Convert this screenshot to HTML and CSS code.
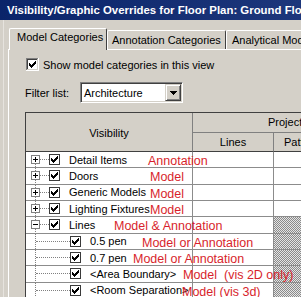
FILE: index.html
```html
<!DOCTYPE html>
<html lang="en">
<head>
  <meta charset="UTF-8">
  <meta name="viewport" content="width=device-width, initial-scale=1.0">
  <title>Visibility/Graphic Overrides</title>
  <link rel="stylesheet" href="styles.css">
</head>
<body>
  <svg class="defs" width="0" height="0">
    <symbol id="chk" viewBox="0 0 11 11">
      <rect x="0.5" y="0.5" width="10" height="10" fill="#fff" stroke="#3a3a3a"/>
      <path d="M2 4h1v3H2z M3 5h1v3H3z M4 6h1v3H4z M5 5h1v3H5z M6 4h1v3H6z M7 3h1v3H7z M8 2h1v3H8z" fill="#000"/>
    </symbol>
    <symbol id="plus" viewBox="0 0 9 9">
      <rect x="0.5" y="0.5" width="8" height="8" fill="#fff" stroke="#808080"/>
      <path d="M2 4h5v1H2z M4 2h1v5H4z" fill="#000"/>
    </symbol>
    <symbol id="minus" viewBox="0 0 9 9">
      <rect x="0.5" y="0.5" width="8" height="8" fill="#fff" stroke="#808080"/>
      <path d="M2 4h5v1H2z" fill="#000"/>
    </symbol>
  </svg>

  <div class="titlebar">Visibility/Graphic Overrides for Floor Plan: Ground Floor</div>

  <div class="dialog">
    <div class="tabs">
      <div class="tab active">Model Categories</div>
      <div class="tab second">Annotation Categories</div>
      <div class="tab third">Analytical Model Categories</div>
    </div>

    <div class="panel">
      <div class="show-row">
        <svg class="check3d" width="13" height="13" viewBox="0 0 13 13" shape-rendering="crispEdges">
          <rect width="13" height="13" fill="#fff"/>
          <path d="M0 0h12v1H1v11H0z" fill="#808080"/>
          <path d="M1 1h10v1H2v9H1z" fill="#404040"/>
          <path d="M12 0h1v13H0v-1h12z" fill="#fff"/>
          <path d="M11 1h1v11H1v-1h10z" fill="#d4d0c8"/>
          <path d="M3 5h1v3H3z M4 6h1v3H4z M5 7h1v3H5z M6 6h1v3H6z M7 5h1v3H7z M8 4h1v3H8z M9 3h1v3H9z" fill="#000"/>
        </svg>
        <span>Show model categories in this view</span>
      </div>

      <div class="filter-row">
        <span class="filter-label">Filter list:</span>
        <div class="combo">
          <span class="combo-text">Architecture</span>
          <span class="combo-btn">
            <svg width="7" height="4" viewBox="0 0 7 4" shape-rendering="crispEdges"><path d="M0 0h7v1H0z M1 1h5v1H1z M2 2h3v1H2z M3 3h1v1H3z" fill="#000"/></svg>
          </span>
        </div>
      </div>

      <div class="grid">
        <div class="grid-head">
          <div class="h-vis">Visibility</div>
          <div class="h-proj">Projection/Surface</div>
          <div class="h-lines">Lines</div>
          <div class="h-pat">Patterns</div>
        </div>

        <div class="row">
          <div class="cell tree first">
            <svg class="exp"><use href="#plus"/></svg><span class="link"></span><svg class="chk"><use href="#chk"/></svg><span class="name">Detail Items</span>
          </div>
          <div class="cell"></div>
          <div class="cell"></div>
          <span class="note n-detail">Annotation</span>
        </div>

        <div class="row">
          <div class="cell tree">
            <svg class="exp"><use href="#plus"/></svg><span class="link"></span><svg class="chk"><use href="#chk"/></svg><span class="name">Doors</span>
          </div>
          <div class="cell"></div>
          <div class="cell"></div>
          <span class="note n-model">Model</span>
        </div>

        <div class="row">
          <div class="cell tree">
            <svg class="exp"><use href="#plus"/></svg><span class="link"></span><svg class="chk"><use href="#chk"/></svg><span class="name">Generic Models</span>
          </div>
          <div class="cell"></div>
          <div class="cell"></div>
          <span class="note n-model">Model</span>
        </div>

        <div class="row">
          <div class="cell tree">
            <svg class="exp"><use href="#plus"/></svg><span class="link"></span><svg class="chk"><use href="#chk"/></svg><span class="name">Lighting Fixtures</span>
          </div>
          <div class="cell"></div>
          <div class="cell"></div>
          <span class="note n-model">Model</span>
        </div>

        <div class="row">
          <div class="cell tree">
            <svg class="exp"><use href="#minus"/></svg><span class="link"></span><svg class="chk"><use href="#chk"/></svg><span class="name">Lines</span>
          </div>
          <div class="cell"></div>
          <div class="cell hatch"></div>
          <span class="note n-lines">Model &amp; Annotation</span>
        </div>

        <div class="row">
          <div class="cell tree child">
            <span class="link"></span><svg class="chk"><use href="#chk"/></svg><span class="name">0.5 pen</span>
          </div>
          <div class="cell"></div>
          <div class="cell hatch"></div>
          <span class="note n-pen5">Model or Annotation</span>
        </div>

        <div class="row">
          <div class="cell tree child">
            <span class="link"></span><svg class="chk"><use href="#chk"/></svg><span class="name">0.7 pen</span>
          </div>
          <div class="cell"></div>
          <div class="cell hatch"></div>
          <span class="note n-pen7">Model or Annotation</span>
        </div>

        <div class="row">
          <div class="cell tree child">
            <span class="link"></span><svg class="chk"><use href="#chk"/></svg><span class="name">&lt;Area Boundary&gt;</span>
          </div>
          <div class="cell"></div>
          <div class="cell hatch"></div>
          <span class="note n-area">Model&nbsp; (vis 2D only)</span>
        </div>

        <div class="row">
          <div class="cell tree child">
            <span class="link"></span><svg class="chk"><use href="#chk"/></svg><span class="name">&lt;Room Separation&gt;</span>
          </div>
          <div class="cell"></div>
          <div class="cell hatch"></div>
          <span class="note n-room">Model (vis 3d)</span>
        </div>
      </div>
    </div>
  </div>
</body>
</html>
```

FILE: styles.css
```css
body {
  margin: 0;
  width: 301px;
  height: 297px;
  overflow: hidden;
  background-color: #d4d0c8;
  font-family: "Liberation Sans", Arial, sans-serif;
  font-size: 11px;
  color: #000;
}
.defs {
  position: absolute;
}

/* Title bar */
.titlebar {
  height: 20px;
  line-height: 21px;
  padding-left: 7px;
  background: linear-gradient(90deg, #0a246a, #1d377b);
  color: #fff;
  font-size: 11.4px;
  font-weight: bold;
  white-space: nowrap;
  overflow: hidden;
}

/* Tabs */
.dialog {
  padding: 8px 0 0 8px;
  box-shadow: inset 3px 0 #d4d0c8, inset 4px 0 #e6e3de;
}
.tabs {
  display: flex;
  align-items: flex-end;
  height: 21px;
  margin-left: 1px;
}
.tab {
  box-sizing: border-box;
  flex: none;
  height: 19px;
  line-height: 18px;
  border-top: 1px solid #fff;
  border-left: 1px solid #fff;
  border-right: 1px solid #404040;
  border-radius: 2px 2px 0 0;
  white-space: nowrap;
  overflow: hidden;
}
.tab.active {
  position: relative;
  z-index: 1;
  width: 98px;
  height: 22px;
  margin-bottom: -1px;
  padding-left: 7px;
  line-height: 17px;
  background-color: #d4d0c8;
}
.tab.second {
  width: 119px;
  padding-left: 4px;
}
.tab.third {
  width: 120px;
  padding-left: 5px;
}

/* Panel */
.panel {
  height: 300px;
  padding: 8px 0 0 16px;
  border-top: 1px solid #fff;
  border-left: 1px solid #fff;
}
.show-row {
  display: flex;
  align-items: center;
  gap: 4px;
  height: 13px;
  padding-left: 1px;
}
.check3d {
  flex: none;
}
.filter-row {
  display: flex;
  align-items: center;
  margin-top: 11px;
}
.filter-label {
  width: 55px;
  flex: none;
}
.combo {
  box-sizing: border-box;
  display: flex;
  align-items: center;
  justify-content: space-between;
  width: 103px;
  height: 21px;
  padding: 0 1px 0 3px;
  background-color: #fff;
  border: 1px solid;
  border-color: #808080 #fff #fff #808080;
  box-shadow: inset 1px 1px #404040, inset -1px -1px #d4d0c8;
}
.combo-btn {
  box-sizing: border-box;
  display: flex;
  align-items: center;
  justify-content: center;
  width: 16px;
  height: 17px;
  background-color: #d4d0c8;
  border: 1px solid;
  border-color: #d4d0c8 #404040 #404040 #d4d0c8;
  box-shadow: inset 1px 1px #fff, inset -1px -1px #808080;
}

/* Grid */
.grid {
  width: 320px;
  margin-top: 9px;
  border-top: 1px solid #404040;
  border-left: 1px solid #404040;
}
.grid-head {
  display: grid;
  grid-template-columns: 167px 81px 1fr;
  grid-template-rows: 20px 19px;
}
.grid-head > div {
  box-sizing: border-box;
  border-right: 1px solid #808080;
  border-bottom: 1px solid #808080;
  white-space: nowrap;
  overflow: hidden;
}
.h-vis {
  grid-row: 1 / 3;
  display: flex;
  align-items: center;
  justify-content: center;
  padding-top: 2px;
  border-bottom-color: #404040 !important;
}
.h-proj {
  grid-column: 2 / 4;
  padding-left: 75px;
  line-height: 19px;
}
.h-lines {
  text-align: center;
  line-height: 18px;
  border-bottom-color: #404040 !important;
}
.h-pat {
  padding-left: 10px;
  line-height: 18px;
  border-bottom-color: #404040 !important;
}

.row {
  position: relative;
  display: grid;
  grid-template-columns: 167px 81px 1fr;
  height: 16.33px;
}
.cell {
  box-sizing: border-box;
  background-color: #fff;
  border-right: 1px solid #8c8c8c;
  border-bottom: 1px solid #8c8c8c;
}
.hatch {
  background: repeating-conic-gradient(#8a8a8a 0 25%, #e4e4e4 0 50%) 0 0 / 2px 2px;
}

/* Tree column */
.tree {
  display: flex;
  align-items: center;
  padding-left: 5px;
  white-space: nowrap;
  background-image: repeating-linear-gradient(#808080 0 1px, transparent 1px 2px);
  background-size: 1px 100%;
  background-position: 9px 0;
  background-repeat: no-repeat;
}
.tree.first {
  background-size: 1px 50%;
  background-position: 9px 100%;
}
.exp {
  flex: none;
  width: 9px;
  height: 9px;
}
.link {
  flex: none;
  width: 9px;
  height: 0;
  border-top: 1px dotted #808080;
}
.chk {
  flex: none;
  width: 11px;
  height: 11px;
}
.name {
  margin-left: 9px;
}
.tree.child {
  padding-left: 10px;
}
.tree.child .link {
  width: 34px;
}

/* Red hand-written notes laid over the grid */
.note {
  position: absolute;
  top: 1px;
  line-height: 17px;
  color: #d81f2c;
  font-size: 12.5px;
  white-space: nowrap;
}
.n-detail { left: 122px; }
.n-model { left: 124px; }
.n-lines { left: 88px; }
.n-pen5 { left: 116px; }
.n-pen7 { left: 107px; }
.n-area { left: 157px; }
.n-room { left: 156px; }
```
